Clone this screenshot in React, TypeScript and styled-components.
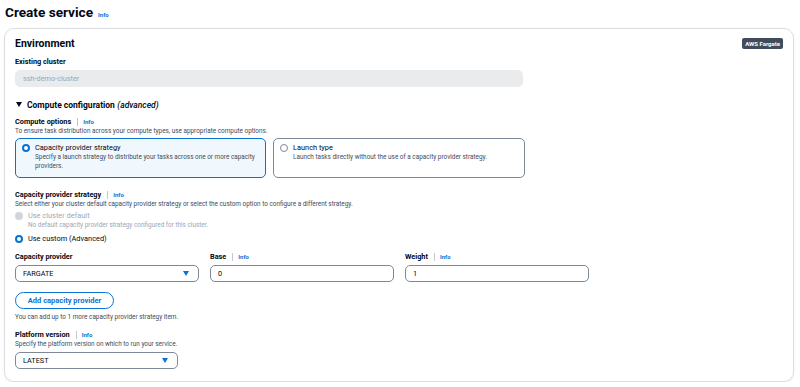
import React from 'react'
import styled, { createGlobalStyle } from 'styled-components'

const Global = createGlobalStyle`
  body {
    margin: 0;
    background: #ffffff;
    font-family: Roboto, "Open Sans", sans-serif;
    color: #000716;
  }
`

const Page = styled.div`
  padding: 4px 6px 0 5px;
  width: 800px;
  box-sizing: border-box;
`

const Header = styled.div`
  display: flex;
  align-items: baseline;
  gap: 5px;
  height: 20px;
`

const Title = styled.h1`
  margin: 0;
  font-size: 13.6px;
  font-weight: 700;
`

const Info = styled.span`
  color: #0972d3;
  font-size: 6px;
  font-weight: 700;
`

const Card = styled.div`
  margin: 4px 0 0 -1px;
  border: 1px solid #dcdde1;
  border-radius: 10px;
  padding: 8px 10px 12px 10px;
  box-shadow: 0 1px 2px rgba(0, 7, 22, 0.08);
`

const CardHead = styled.div`
  display: flex;
  justify-content: space-between;
  align-items: flex-start;
  height: 20px;
`

const H2 = styled.h2`
  margin: 0;
  font-size: 10.5px;
  font-weight: 700;
  line-height: 14px;
`

const Badge = styled.span`
  margin-top: 1px;
  background: #414d5c;
  color: #fff;
  font-size: 6px;
  font-weight: 700;
  padding: 1.5px 3px;
  border-radius: 2px;
  line-height: 8px;
`

const Field = styled.div<{ mt?: number }>`
  margin-top: ${(p) => p.mt ?? 0}px;
  display: flex;
  flex-direction: column;
`

const Label = styled.div`
  display: flex;
  align-items: center;
  font-size: 7.3px;
  font-weight: 700;
  line-height: 10px;
`

const Sep = styled.span`
  width: 1px;
  height: 8px;
  background: #c6c6cd;
  margin: 0 5px 0 6px;
`

const Desc = styled.div<{ muted?: boolean }>`
  font-size: 6.4px;
  line-height: 9px;
  color: ${(p) => (p.muted ? '#9ba7b6' : '#414d5c')};
`

const Input = styled.div<{ disabled?: boolean; w: number }>`
  box-sizing: border-box;
  width: ${(p) => p.w}px;
  height: 17px;
  margin-top: 3px;
  border-radius: 5px;
  border: 1px solid ${(p) => (p.disabled ? '#e9ebed' : '#7d8998')};
  background: ${(p) => (p.disabled ? '#e9ebed' : '#fff')};
  color: ${(p) => (p.disabled ? '#9ba7b6' : '#000716')};
  font-size: 7.3px;
  display: flex;
  align-items: center;
  justify-content: space-between;
  padding: 0 9px 0 7px;
`

const Caret = styled.span`
  width: 0;
  height: 0;
  border-left: 3.5px solid transparent;
  border-right: 3.5px solid transparent;
  border-top: 5px solid #0972d3;
`

const Expander = styled.div`
  margin-top: 12px;
  display: flex;
  align-items: center;
  font-size: 8.5px;
  font-weight: 700;
  height: 11px;
  em {
    font-style: italic;
    font-weight: 500;
    margin-left: 2.5px;
  }
`

const Tri = styled.span`
  width: 0;
  height: 0;
  margin: 0 5px 0 1px;
  border-left: 3px solid transparent;
  border-right: 3px solid transparent;
  border-top: 5px solid #000716;
`

const Tiles = styled.div`
  display: flex;
  gap: 7px;
  margin-top: 2px;
`

const Tile = styled.div<{ selected?: boolean }>`
  box-sizing: border-box;
  width: ${(p) => (p.selected ? 251 : 252)}px;
  height: 40px;
  border-radius: 5px;
  border: ${(p) => (p.selected ? '1.5px solid #0972d3' : '1.2px solid #7d8998')};
  background: ${(p) => (p.selected ? '#f0f8fe' : '#fff')};
  padding: 4px 8px 0 6px;
  display: flex;
  gap: 5px;
`

const Radio = styled.span<{ checked?: boolean; disabled?: boolean }>`
  flex: none;
  box-sizing: border-box;
  width: 8px;
  height: 8px;
  margin-top: 1px;
  border-radius: 50%;
  border: ${(p) =>
    p.disabled ? '4px solid #d1d5db' : p.checked ? '2.4px solid #0972d3' : '1px solid #7d8998'};
  background: #fff;
`

const TileText = styled.div`
  display: flex;
  flex-direction: column;
`

const OptTitle = styled.div<{ muted?: boolean }>`
  font-size: 7.4px;
  line-height: 10px;
  color: ${(p) => (p.muted ? '#9ba7b6' : '#000716')};
`

const RadioRow = styled.div<{ mt?: number }>`
  display: flex;
  gap: 5px;
  margin-top: ${(p) => p.mt ?? 0}px;
`

const Row = styled.div`
  display: flex;
  gap: 11px;
  margin-top: 8px;
`

const Button = styled.div`
  margin-top: 10px;
  box-sizing: border-box;
  width: 99px;
  height: 17px;
  border: 1.5px solid #0972d3;
  border-radius: 9px;
  color: #0972d3;
  font-size: 7.5px;
  font-weight: 700;
  display: flex;
  align-items: center;
  justify-content: center;
`

const Helper = styled(Desc)`
  margin-top: 4px;
`

function InfoLabel({ text }: { text: string }) {
  return (
    <Label>
      {text}
      <Sep />
      <Info>Info</Info>
    </Label>
  )
}

export default function App() {
  return (
    <>
      <Global />
      <Page>
        <Header>
          <Title>Create service</Title>
          <Info>Info</Info>
        </Header>
        <Card>
          <CardHead>
            <H2>Environment</H2>
            <Badge>AWS Fargate</Badge>
          </CardHead>
          <Field>
            <Label>Existing cluster</Label>
            <Input disabled w={508}>ssh-demo-cluster</Input>
          </Field>
          <Expander>
            <Tri />
            <span>Compute configuration</span>
            <em>(advanced)</em>
          </Expander>
          <Field mt={7}>
            <InfoLabel text="Compute options" />
            <Desc>To ensure task distribution across your compute types, use appropriate compute options.</Desc>
            <Tiles>
              <Tile selected>
                <Radio checked />
                <TileText>
                  <OptTitle>Capacity provider strategy</OptTitle>
                  <Desc>Specify a launch strategy to distribute your tasks across one or more capacity providers.</Desc>
                </TileText>
              </Tile>
              <Tile>
                <Radio />
                <TileText>
                  <OptTitle>Launch type</OptTitle>
                  <Desc>Launch tasks directly without the use of a capacity provider strategy.</Desc>
                </TileText>
              </Tile>
            </Tiles>
          </Field>
          <Field mt={12}>
            <InfoLabel text="Capacity provider strategy" />
            <Desc>Select either your cluster default capacity provider strategy or select the custom option to configure a different strategy.</Desc>
            <RadioRow mt={2}>
              <Radio disabled />
              <TileText>
                <OptTitle muted>Use cluster default</OptTitle>
                <Desc muted>No default capacity provider strategy configured for this cluster.</Desc>
              </TileText>
            </RadioRow>
            <RadioRow mt={4}>
              <Radio checked />
              <OptTitle>Use custom (Advanced)</OptTitle>
            </RadioRow>
          </Field>
          <Row>
            <Field>
              <Label>Capacity provider</Label>
              <Input w={184}>
                FARGATE
                <Caret />
              </Input>
            </Field>
            <Field>
              <InfoLabel text="Base" />
              <Input w={184}>0</Input>
            </Field>
            <Field>
              <InfoLabel text="Weight" />
              <Input w={184}>1</Input>
            </Field>
          </Row>
          <Button>Add capacity provider</Button>
          <Helper>You can add up to 1 more capacity provider strategy item.</Helper>
          <Field mt={8}>
            <InfoLabel text="Platform version" />
            <Desc>Specify the platform version on which to run your service.</Desc>
            <Input w={163}>
              LATEST
              <Caret />
            </Input>
          </Field>
        </Card>
      </Page>
    </>
  )
}
